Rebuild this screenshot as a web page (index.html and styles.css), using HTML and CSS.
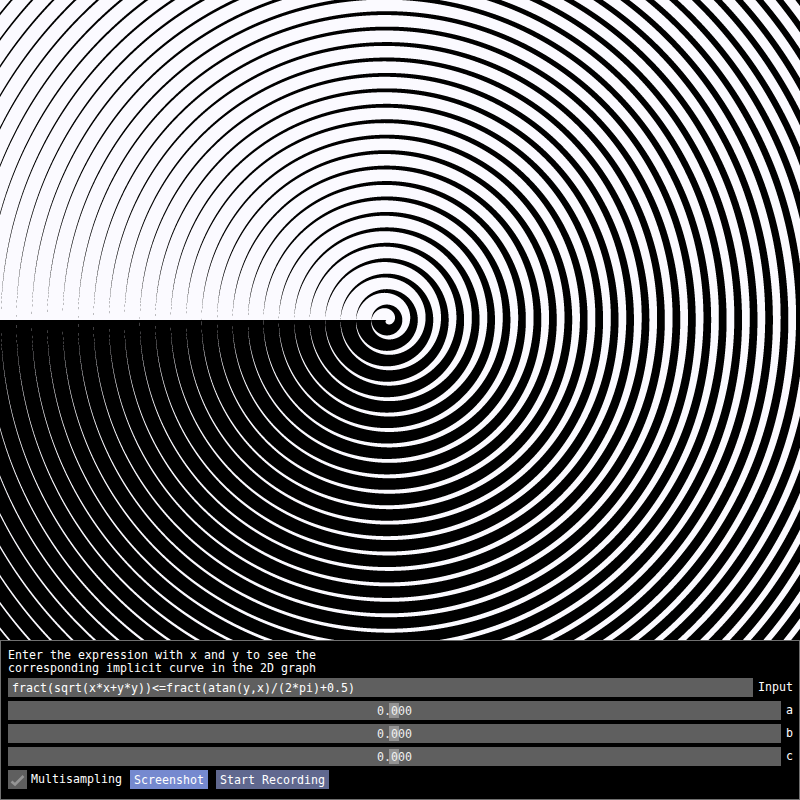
FILE: index.html
```html
<!DOCTYPE html>
<html lang="en">
<head>
<meta charset="utf-8">
<title>Implicit curve</title>
<link rel="stylesheet" href="styles.css">
</head>
<body>
<canvas id="graph" class="graph" width="800" height="640"></canvas>
<section class="panel">
  <p class="intro">Enter the expression with x and y to see the<br>corresponding implicit curve in the 2D graph</p>
  <div class="row row-input">
    <div class="field field-text">fract(sqrt(x*x+y*y))&lt;=fract(atan(y,x)/(2*pi)+0.5)</div>
    <span class="label">Input</span>
  </div>
  <div class="row">
    <div class="field field-slider"><span class="grab"></span><span class="value">0.000</span></div>
    <span class="label">a</span>
  </div>
  <div class="row">
    <div class="field field-slider"><span class="grab"></span><span class="value">0.000</span></div>
    <span class="label">b</span>
  </div>
  <div class="row">
    <div class="field field-slider"><span class="grab"></span><span class="value">0.000</span></div>
    <span class="label">c</span>
  </div>
  <div class="row row-actions">
    <div class="check">
      <svg class="check-box" width="19" height="19" viewBox="0 0 19 19"><path class="check-mark" d="M3.5 11.5 L7 14.5 L15.5 6"/></svg>
      <span class="check-label">Multisampling</span>
    </div>
    <button class="btn btn-primary">Screenshot</button>
    <button class="btn btn-muted">Start Recording</button>
  </div>
</section>
<script src="script.js"></script>
</body>
</html>
```
FILE: styles.css
```css
* { box-sizing: border-box; }
html, body { margin: 0; padding: 0; background: #000; }
body {
  width: 800px;
  height: 800px;
  overflow: hidden;
  font-family: "DejaVu Sans Mono", "Liberation Mono", monospace;
  font-size: 11.6px;
  line-height: 13px;
  letter-spacing: 0.02px;
  color: #fff;
}
.graph { display: block; width: 800px; height: 640px; }
.panel {
  height: 160px;
  border: 1px solid #707070;
  padding: 7px;
  background: #000;
  display: flex;
  flex-direction: column;
  gap: 4px;
}
.intro { margin: 0; height: 26px; padding-top: 1px; white-space: nowrap; }
.row { display: flex; flex: none; height: 19px; align-items: center; gap: 5px; width: 784px; }
.field { flex: none; height: 19px; background: #5f5f5f; line-height: 21px; white-space: nowrap; }
.field-text { width: 745px; padding-left: 4px; }
.field-slider { width: 773px; display: flex; justify-content: center; position: relative; }
.value { position: relative; color: #f0f0f0; }
.grab { position: absolute; left: 381px; top: 2px; width: 10px; height: 15px; background: #939393; }
.label { white-space: nowrap; line-height: 21px; }
.row-actions { gap: 8px; }
.check { display: flex; flex: none; align-items: center; gap: 4px; }
.check-box { display: block; background: #5f5f5f; }
.check-mark { fill: none; stroke: #959595; stroke-width: 2.6; }
.check-label { line-height: 21px; }
.btn {
  flex: none;
  height: 19px;
  padding: 2px 0 0;
  border: 0;
  font: inherit;
  letter-spacing: inherit;
  color: #fff;
  white-space: nowrap;
}
.btn-primary { background: #7589cf; width: 78px; }
.btn-muted { background: #60688f; width: 113px; }
```
FILE: script.js
```js
(function () {
  var canvas = document.getElementById('graph');
  var ctx = canvas.getContext('2d');
  var W = canvas.width, H = canvas.height;
  var img = ctx.createImageData(W, H);
  var cx = 386.9, cy = 320, period = 15.44, N = 4;
  var TWO_PI = Math.PI * 2;
  function fract(v) { return v - Math.floor(v); }
  for (var py = 0; py < H; py++) {
    for (var px = 0; px < W; px++) {
      var hit = 0;
      for (var j = 0; j < N; j++) {
        for (var i = 0; i < N; i++) {
          var x = (px + (i + 0.5) / N - cx) / period;
          var y = (cy - py - (j + 0.5) / N) / period;
          var r = Math.sqrt(x * x + y * y);
          if (fract(r) <= fract(Math.atan2(y, x) / TWO_PI + 0.5)) hit++;
        }
      }
      var a = hit / (N * N);
      var o = (py * W + px) * 4;
      img.data[o] = 251 * a;
      img.data[o + 1] = 250 * a;
      img.data[o + 2] = 255 * a;
      img.data[o + 3] = 255;
    }
  }
  ctx.putImageData(img, 0, 0);
})();
```
